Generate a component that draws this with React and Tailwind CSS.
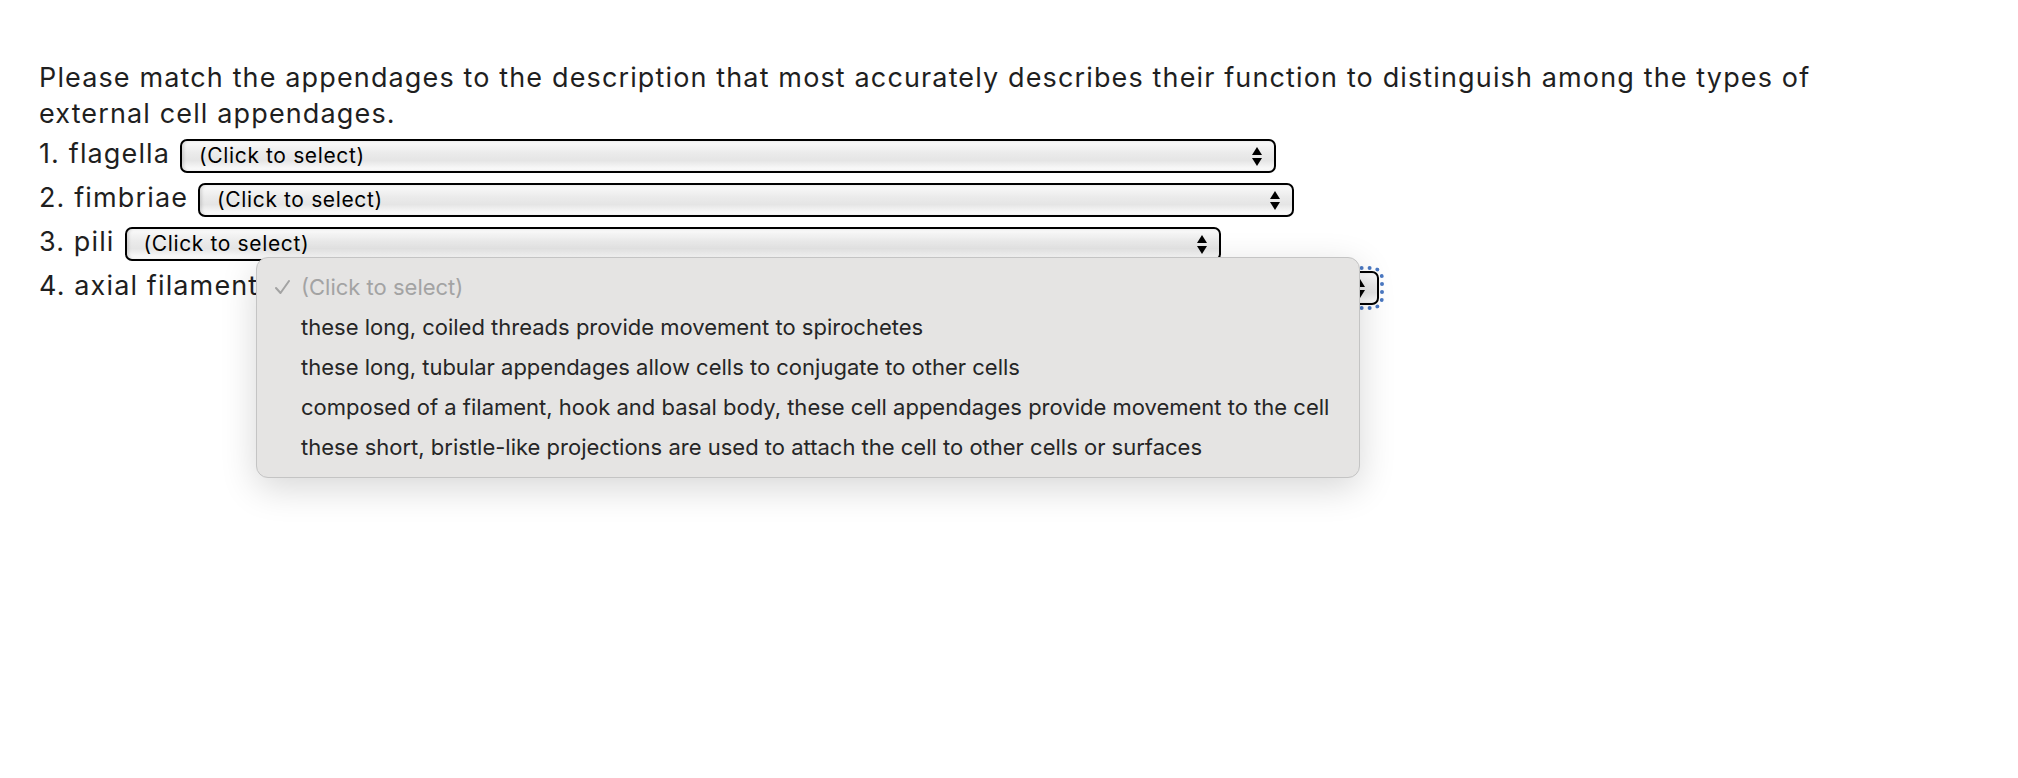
import { Fragment } from 'react'

const ROWS = [
  { label: '1. flagella', gap: 'gap-[10px]' },
  { label: '2. fimbriae', gap: 'gap-[10px]' },
  { label: '3. pili', gap: 'gap-[10px]' },
  { label: '4. axial filament', gap: 'gap-[25px]', focused: true },
]

const OPTIONS = [
  'these long, coiled threads provide movement to spirochetes',
  'these long, tubular appendages allow cells to conjugate to other cells',
  'composed of a filament, hook and basal body, these cell appendages provide movement to the cell',
  'these short, bristle-like projections are used to attach the cell to other cells or surfaces',
]

function Arrows() {
  return (
    <svg width="10" height="19" viewBox="0 0 10 19" className="shrink-0">
      <path d="M5 0 L10 8 L0 8 Z" fill="#000" />
      <path d="M0 11 L10 11 L5 19 Z" fill="#000" />
    </svg>
  )
}

function FakeSelect({ focused }) {
  return (
    <div
      className={`flex items-center justify-between w-[1096px] h-[34px] shrink-0 border-2 border-black rounded-[7px] pl-[17px] pr-[12px] bg-[linear-gradient(#fbfbfb,#ebebeb_40%,#e5e5e5_65%,#ffffff)] shadow-[inset_2px_0_3px_rgba(0,0,0,0.12)] ${
        focused ? 'outline-[4px] outline-dotted outline-[#4a78c2] outline-offset-[1px]' : ''
      }`}
    >
      <span className="text-[21px] leading-[30px] tracking-[0.03em] text-black">(Click to select)</span>
      <Arrows />
    </div>
  )
}

export default function App() {
  return (
    <div className="relative min-h-[778px] bg-white pt-[60px] pl-[39px] font-['Inter','Liberation_Sans',sans-serif] text-[#1f1f1f]">
      <p className="w-[1850px] text-[27px] leading-[36px] tracking-[0.042em]">
        Please match the appendages to the description that most accurately describes their function to distinguish among the types of external cell appendages.
      </p>

      <div className="mt-[7px] flex flex-col gap-[10px]">
        {ROWS.map(({ label, gap, focused }) => (
          <div key={label} className={`flex items-start h-[34px] ${gap}`}>
            <span className="text-[27px] leading-[29px] tracking-[0.042em] whitespace-nowrap">{label}</span>
            <FakeSelect focused={focused} />
          </div>
        ))}
      </div>

      {/* ── open dropdown menu of the 4th select ── */}
      <div className="absolute left-[256px] top-[257px] w-[1104px] h-[221px] py-[9px] bg-[#e5e4e3] border border-[#c4c4c4] rounded-[12px] shadow-[0_10px_36px_rgba(0,0,0,0.16)]">
        <div className="flex items-center h-[40px] pl-[18px]">
          <span className="w-[26px] shrink-0">
            <svg width="15" height="14" viewBox="0 0 15 14">
              <polyline points="1,8 5.5,13 14,1" fill="none" stroke="#a3a3a3" strokeWidth="2" strokeLinecap="round" strokeLinejoin="round" />
            </svg>
          </span>
          <span className="text-[22px] leading-[40px] text-[#a3a3a3]">(Click to select)</span>
        </div>
        {OPTIONS.map((opt) => (
          <Fragment key={opt}>
            <div className="flex items-center h-[40px] pl-[44px]">
              <span className="text-[22px] leading-[40px] text-[#262626] whitespace-nowrap">{opt}</span>
            </div>
          </Fragment>
        ))}
      </div>
    </div>
  )
}
